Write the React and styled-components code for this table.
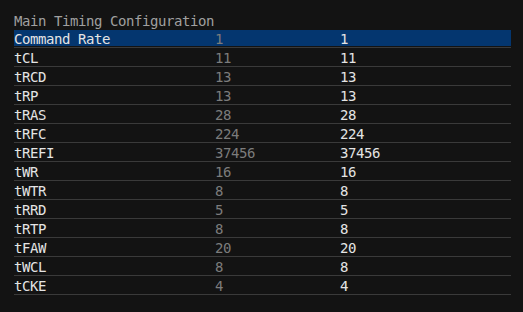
import React from 'react';
import styled, { createGlobalStyle } from 'styled-components';

const GlobalStyle = createGlobalStyle`
    html, body {
        margin: 0;
        padding: 0;
        background: #131313;
    }
    body {
        width: 523px;
        height: 312px;
        overflow: hidden;
        font-family: "DejaVu Sans Mono", "Liberation Mono", monospace;
    }
`;

const Panel = styled.div`
    padding: 11px 12px 0 14px;
    font-size: 14px;
    letter-spacing: -0.43px;
`;

const Title = styled.div`
    height: 18px;
    line-height: 20px;
    color: #a0a0a0;
`;

const Row = styled.div`
    padding: 1px 0;
    border-bottom: 1px solid #3a3a3a;
`;

const Inner = styled.div`
    display: grid;
    grid-template-columns: 201px 125px 1fr;
    height: 16px;
    line-height: 18px;
    background: ${(p) => (p.$selected ? '#04366f' : 'transparent')};
`;

const Cell = styled.span`
    color: ${(p) => (p.$dim ? '#7c7c7c' : '#e4e4e4')};
    white-space: nowrap;
`;

const timings = [
    ['Command Rate', '1', '1'],
    ['tCL', '11', '11'],
    ['tRCD', '13', '13'],
    ['tRP', '13', '13'],
    ['tRAS', '28', '28'],
    ['tRFC', '224', '224'],
    ['tREFI', '37456', '37456'],
    ['tWR', '16', '16'],
    ['tWTR', '8', '8'],
    ['tRRD', '5', '5'],
    ['tRTP', '8', '8'],
    ['tFAW', '20', '20'],
    ['tWCL', '8', '8'],
    ['tCKE', '4', '4'],
];

export default function App() {
    return (
        <>
            <GlobalStyle />
            <Panel>
                <Title>Main Timing Configuration</Title>
                {timings.map(([name, def, cur], i) => (
                    <Row key={name}>
                        <Inner $selected={i === 0}>
                            <Cell>{name}</Cell>
                            <Cell $dim>{def}</Cell>
                            <Cell>{cur}</Cell>
                        </Inner>
                    </Row>
                ))}
            </Panel>
        </>
    );
}
